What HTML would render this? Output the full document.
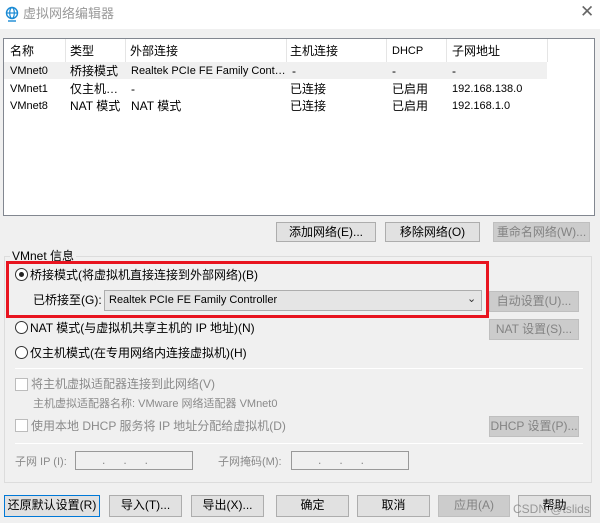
<!DOCTYPE html>
<html><head><meta charset="utf-8"><style>
*{box-sizing:border-box;margin:0;padding:0}
body{width:600px;height:523px;background:#f0f0f0;font-family:"Liberation Sans","Noto Sans CJK SC",sans-serif;font-size:12px;color:#000;position:relative;overflow:hidden}
.a{position:absolute;white-space:nowrap;line-height:15px}
.btn{position:absolute;background:#e1e1e1;border:1px solid #adadad;text-align:center;line-height:19px;font-size:12px}
.dis{background:#cccccc;border-color:#bfbfbf;color:#838383}
.g{color:#8a8a8a}
.radio{position:absolute;width:13px;height:13px;border:1px solid #333;border-radius:50%;background:#fff}
.chk{position:absolute;width:13px;height:13px;border:1px solid #bcbcbc;background:#fff}
.sep{position:absolute;height:1px;background:#a0a0a0;border-bottom:1px solid #fff}
</style></head><body>
<div class="a" style="left:0;top:0;width:600px;height:29px;background:#fff"></div>
<svg class="a" style="left:5px;top:6px" width="14" height="16" viewBox="0 0 14 16"><circle cx="7" cy="7" r="5.5" fill="none" stroke="#1a8ad4" stroke-width="1.4"/><ellipse cx="7" cy="7" rx="2.3" ry="5.5" fill="none" stroke="#1a8ad4" stroke-width="1.2"/><line x1="1.5" y1="7" x2="12.5" y2="7" stroke="#1a8ad4" stroke-width="1.2"/><line x1="3" y1="15" x2="11" y2="15" stroke="#1a8ad4" stroke-width="1.4"/></svg>
<div class="a" style="left:23px;top:6px;font-size:13px;color:#999">虚拟网络编辑器</div>
<div class="a" style="left:580px;top:4px;font-size:17px;color:#666">✕</div>

<div class="a" style="left:3px;top:38px;width:592px;height:178px;background:#fff;border:1px solid #828790"></div>
<div class="a" style="left:65px;top:39px;width:1px;height:23px;background:#e5e5e5"></div>
<div class="a" style="left:125px;top:39px;width:1px;height:23px;background:#e5e5e5"></div>
<div class="a" style="left:286px;top:39px;width:1px;height:23px;background:#e5e5e5"></div>
<div class="a" style="left:386px;top:39px;width:1px;height:23px;background:#e5e5e5"></div>
<div class="a" style="left:446px;top:39px;width:1px;height:23px;background:#e5e5e5"></div>
<div class="a" style="left:547px;top:39px;width:1px;height:23px;background:#e5e5e5"></div>
<div class="a" style="left:4px;top:62px;width:543px;height:17px;background:#f0f0f0"></div>
<div class="a" style="left:10px;top:44px">名称</div><div class="a" style="left:70px;top:44px">类型</div><div class="a" style="left:130px;top:44px">外部连接</div><div class="a" style="left:290px;top:44px">主机连接</div><div class="a" style="left:392px;top:44px;font-size:11px">DHCP</div><div class="a" style="left:452px;top:44px">子网地址</div>
<div class="a" style="left:10px;top:64px;font-size:11px">VMnet0</div><div class="a" style="left:70px;top:64px">桥接模式</div><div class="a" style="left:131px;top:64px;font-size:11px">Realtek PCIe FE Family Cont…</div><div class="a" style="left:292px;top:64px">-</div><div class="a" style="left:392px;top:64px">-</div><div class="a" style="left:452px;top:64px">-</div>
<div class="a" style="left:10px;top:82px;font-size:11px">VMnet1</div><div class="a" style="left:70px;top:82px">仅主机…</div><div class="a" style="left:131px;top:82px">-</div><div class="a" style="left:290px;top:82px">已连接</div><div class="a" style="left:392px;top:82px">已启用</div><div class="a" style="left:452px;top:82px;font-size:11px">192.168.138.0</div>
<div class="a" style="left:10px;top:99px;font-size:11px">VMnet8</div><div class="a" style="left:70px;top:99px">NAT 模式</div><div class="a" style="left:131px;top:99px">NAT 模式</div><div class="a" style="left:290px;top:99px">已连接</div><div class="a" style="left:392px;top:99px">已启用</div><div class="a" style="left:452px;top:99px;font-size:11px">192.168.1.0</div>

<div class="btn" style="left:276px;top:222px;width:100px;height:20px">添加网络(E)...</div>
<div class="btn" style="left:385px;top:222px;width:95px;height:20px">移除网络(O)</div>
<div class="btn dis" style="left:493px;top:222px;width:97px;height:20px">重命名网络(W)...</div>

<div class="a" style="left:4px;top:256px;width:588px;height:227px;border:1px solid #dcdcdc"></div>
<div class="a" style="left:10px;top:249px;background:#f0f0f0;padding:0 2px">VMnet 信息</div>
<div class="a" style="left:6px;top:261px;width:483px;height:57px;border:3px solid #e8141f"></div>
<div class="radio" style="left:15px;top:268px"></div><div class="a" style="left:19px;top:272px;width:5px;height:5px;border-radius:50%;background:#222"></div>
<div class="a" style="left:30px;top:268px">桥接模式(将虚拟机直接连接到外部网络)(B)</div>
<div class="a" style="left:33px;top:293px">已桥接至(G):</div>
<div class="a" style="left:104px;top:290px;width:378px;height:21px;background:#e5e5e5;border:1px solid #adadad;padding:2px 4px;font-size:11px">Realtek PCIe FE Family Controller</div>
<div class="a" style="left:467px;top:292px;font-size:11px;color:#333">⌄</div>
<div class="btn dis" style="left:489px;top:291px;width:90px;height:21px">自动设置(U)...</div>
<div class="radio" style="left:15px;top:321px"></div><div class="a" style="left:30px;top:321px">NAT 模式(与虚拟机共享主机的 IP 地址)(N)</div>
<div class="btn dis" style="left:489px;top:319px;width:90px;height:21px">NAT 设置(S)...</div>
<div class="radio" style="left:15px;top:346px"></div><div class="a" style="left:30px;top:346px">仅主机模式(在专用网络内连接虚拟机)(H)</div>
<div class="sep" style="left:15px;top:368px;width:568px"></div>
<div class="chk" style="left:15px;top:378px"></div><div class="a g" style="left:31px;top:377px">将主机虚拟适配器连接到此网络(V)</div>
<div class="a g" style="left:33px;top:397px;font-size:11px">主机虚拟适配器名称: VMware 网络适配器 VMnet0</div>
<div class="chk" style="left:15px;top:419px"></div><div class="a g" style="left:31px;top:419px">使用本地 DHCP 服务将 IP 地址分配给虚拟机(D)</div>
<div class="btn dis" style="left:489px;top:416px;width:90px;height:21px">DHCP 设置(P)...</div>
<div class="sep" style="left:15px;top:443px;width:568px"></div>
<div class="a g" style="left:15px;top:455px;font-size:11px">子网 IP (I):</div>
<div class="a g" style="left:75px;top:451px;width:118px;height:19px;border:1px solid #999;background:#f0f0f0;text-align:center;letter-spacing:18px;line-height:17px">...</div>
<div class="a g" style="left:218px;top:455px;font-size:11px">子网掩码(M):</div>
<div class="a g" style="left:291px;top:451px;width:118px;height:19px;border:1px solid #999;background:#f0f0f0;text-align:center;letter-spacing:18px;line-height:17px">...</div>

<div class="btn" style="left:4px;top:495px;width:96px;height:22px;border-color:#0078d7">还原默认设置(R)</div>
<div class="btn" style="left:109px;top:495px;width:73px;height:22px">导入(T)...</div>
<div class="btn" style="left:191px;top:495px;width:73px;height:22px">导出(X)...</div>
<div class="btn" style="left:276px;top:495px;width:73px;height:22px">确定</div>
<div class="btn" style="left:357px;top:495px;width:73px;height:22px">取消</div>
<div class="btn dis" style="left:438px;top:495px;width:72px;height:22px">应用(A)</div>
<div class="btn" style="left:518px;top:495px;width:73px;height:22px">帮助</div>
<div class="a" style="left:513px;top:502px;font-size:12px;color:rgba(120,120,120,.7)">CSDN @tslids</div>
</body></html>
